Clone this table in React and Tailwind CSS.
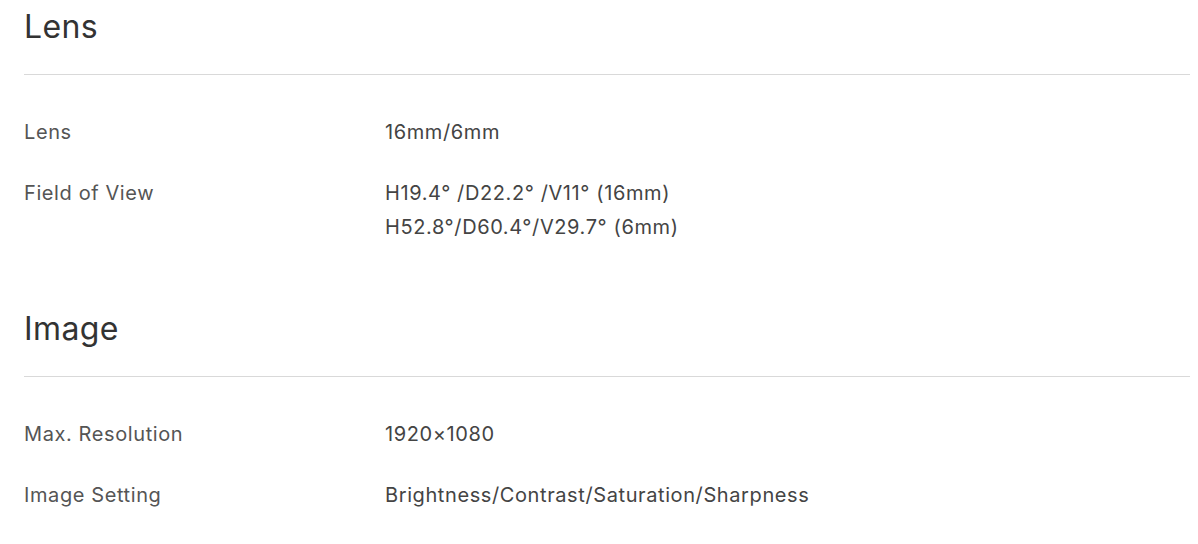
const specs = [
  {
    title: 'Lens',
    rows: [
      { label: 'Lens', value: ['16mm/6mm'] },
      {
        label: 'Field of View',
        value: ['H19.4° /D22.2° /V11° (16mm)', 'H52.8°/D60.4°/V29.7° (6mm)'],
      },
    ],
  },
  {
    title: 'Image',
    rows: [
      { label: 'Max. Resolution', value: ['1920×1080'] },
      { label: 'Image Setting', value: ['Brightness/Contrast/Saturation/Sharpness'] },
    ],
  },
];

export default function App() {
  return (
    <div className="bg-white min-h-[544px] pl-6 pr-2 pt-[7px] font-['Inter',sans-serif]">
      {specs.map((group) => (
        <section key={group.title} className="mb-[65px]">
          <h2 className="text-[32px] leading-[40px] tracking-[0.4px] text-[#333] pb-[27px] border-b border-[#d9d9d9]">
            {group.title}
          </h2>
          <div className="pt-10 flex flex-col gap-[27px]">
            {group.rows.map((row) => (
              <div
                key={row.label}
                className="grid grid-cols-[361px_1fr] text-[20px] leading-[34px] tracking-[0.6px]"
              >
                <div className="text-[#555]">{row.label}</div>
                <div className="text-[#444]">
                  {row.value.map((line) => (
                    <div key={line}>{line}</div>
                  ))}
                </div>
              </div>
            ))}
          </div>
        </section>
      ))}
    </div>
  );
}
